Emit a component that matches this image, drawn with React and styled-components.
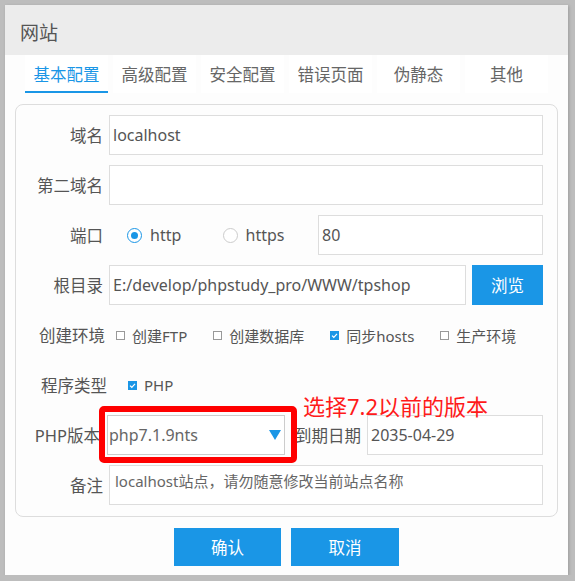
import React from "react";
import styled, { createGlobalStyle } from "styled-components";

const GlobalStyle = createGlobalStyle`
  html, body {
    margin: 0;
    padding: 0;
    background: #bdbdbd;
  }
  body {
    font-family: "Noto Sans", "Noto Sans CJK SC", sans-serif;
  }
`;

const BLUE = "#1a96e6";

const StyledDialog = styled.div`
  margin: 5px 0 0 5px;
  width: 563px;
  height: 570px;
  background: #fdfdfd;
  box-shadow: 1px 1px 3px rgba(0, 0, 0, 0.18);
  display: flex;
  flex-direction: column;
`;

const StyledHeader = styled.div`
  height: 50px;
  box-sizing: border-box;
  padding: 3px 0 0 15px;
  background: #ececec;
  display: flex;
  align-items: center;
  font-size: 19px;
  color: #555;
`;

const StyledTabBar = styled.div`
  display: flex;
  gap: 5px;
  padding-left: 20px;
  height: 38px;
  margin-bottom: 11px;
`;

const StyledTab = styled.div`
  width: 83px;
  box-sizing: border-box;
  display: flex;
  align-items: center;
  justify-content: center;
  padding-top: 2px;
  font-size: 16.5px;
  background: #fff;
  color: ${(p) => (p.$active ? BLUE : "#666")};
  border-bottom: 2px solid ${(p) => (p.$active ? BLUE : "transparent")};
`;

const StyledPanel = styled.div`
  margin: 0 10px;
  border: 1px solid #ddd;
  border-radius: 8px;
  padding: 10px 14px 11px 0;
  display: flex;
  flex-direction: column;
  gap: 10px;
`;

const StyledRow = styled.div`
  position: relative;
  display: flex;
  align-items: center;
  height: 40px;
`;

const StyledLabel = styled.div`
  flex: none;
  width: ${(p) => p.$width || 87}px;
  margin-right: ${(p) => (p.$gap === undefined ? 6 : p.$gap)}px;
  text-align: right;
  font-size: 16.5px;
  color: #555;
  white-space: nowrap;
`;

const StyledInput = styled.input`
  flex: 1;
  min-width: 0;
  height: 40px;
  box-sizing: border-box;
  margin: 0;
  border: 1px solid #ddd;
  border-radius: 0;
  padding: 0 3px;
  background: #fff;
  font-family: inherit;
  font-size: 16px;
  color: #555;
  outline: none;
`;

const StyledNote = styled.textarea`
  flex: 1;
  height: 40px;
  box-sizing: border-box;
  margin: 0;
  border: 1px solid #ddd;
  padding: 5px 5px;
  background: #fff;
  resize: none;
  overflow: hidden;
  font-family: inherit;
  font-size: 15px;
  line-height: 20px;
  color: #555;
  outline: none;

  &::placeholder {
    color: #666;
    opacity: 1;
  }
`;

const StyledButton = styled.div`
  flex: none;
  width: ${(p) => p.$width}px;
  height: ${(p) => p.$height || 40}px;
  margin-left: ${(p) => p.$left || 0}px;
  display: flex;
  align-items: center;
  justify-content: center;
  background: ${BLUE};
  color: #fff;
  font-size: 16.5px;
`;

const StyledRadioGroup = styled.div`
  display: flex;
  margin-left: 18px;
`;

const StyledRadio = styled.div`
  width: 95.5px;
  display: flex;
  align-items: center;
  gap: 8px;
  font-size: 16px;
  color: #555;
`;

const StyledDot = styled.span`
  width: 15px;
  height: 15px;
  box-sizing: border-box;
  border-radius: 50%;
  border: 1px solid ${(p) => (p.$on ? BLUE : "#ccc")};
  background: #fff;
  display: flex;
  align-items: center;
  justify-content: center;

  &::after {
    content: "";
    width: 7px;
    height: 7px;
    border-radius: 50%;
    background: ${(p) => (p.$on ? BLUE : "transparent")};
  }
`;

const StyledChecks = styled.div`
  display: flex;
  gap: 26px;
  margin-left: ${(p) => p.$left}px;
`;

const StyledCheck = styled.div`
  display: flex;
  align-items: center;
  gap: 7px;
  font-size: 15px;
  color: #555;
  white-space: nowrap;
`;

const StyledSelectWrap = styled.div`
  position: relative;
  width: 178px;
  height: 40px;
  flex: none;
`;

const StyledSelect = styled.div`
  height: 100%;
  box-sizing: border-box;
  border: 1px solid #ccc;
  background: #fff;
  display: flex;
  align-items: center;
  justify-content: space-between;
  padding: 0 3px 0 1px;
  font-size: 16px;
  color: #666;
`;

const StyledArrow = styled.span`
  width: 0;
  height: 0;
  border-left: 6px solid transparent;
  border-right: 6px solid transparent;
  border-top: 10px solid ${BLUE};
`;

const StyledHighlight = styled.div`
  position: absolute;
  left: -8px;
  top: -9px;
  right: -12px;
  bottom: -8px;
  border: 6px solid #ff0000;
  border-radius: 5px;
  pointer-events: none;
`;

const StyledHint = styled.div`
  position: absolute;
  left: 287px;
  top: -22px;
  font-size: 22px;
  line-height: 26px;
  color: #ff1a1a;
  white-space: nowrap;
`;

const StyledFooter = styled.div`
  display: flex;
  justify-content: center;
  gap: 10px;
  margin-top: 11px;
`;

const CheckBox = ({ on }) => (
  <svg width="9" height="9" viewBox="0 0 9 9">
    {on ? (
      <>
        <rect width="9" height="9" fill={BLUE} />
        <polyline
          points="2,4.6 3.8,6.3 7,2.8"
          fill="none"
          stroke="#fff"
          strokeWidth="1.2"
        />
      </>
    ) : (
      <rect x="0.5" y="0.5" width="8" height="8" fill="#fff" stroke="#999" />
    )}
  </svg>
);

const Check = ({ on, children }) => (
  <StyledCheck>
    <CheckBox on={on} />
    {children}
  </StyledCheck>
);

const Radio = ({ on, children }) => (
  <StyledRadio>
    <StyledDot $on={on} />
    {children}
  </StyledRadio>
);

const tabs = ["基本配置", "高级配置", "安全配置", "错误页面", "伪静态", "其他"];

const App = () => {
  return (
    <>
      <GlobalStyle />
      <StyledDialog>
        <StyledHeader>网站</StyledHeader>
        <StyledTabBar>
          {tabs.map((t, i) => (
            <StyledTab key={t} $active={i === 0}>
              {t}
            </StyledTab>
          ))}
        </StyledTabBar>

        <StyledPanel>
          <StyledRow>
            <StyledLabel>域名</StyledLabel>
            <StyledInput defaultValue="localhost" readOnly />
          </StyledRow>

          <StyledRow>
            <StyledLabel>第二域名</StyledLabel>
            <StyledInput defaultValue="" readOnly />
          </StyledRow>

          <StyledRow>
            <StyledLabel>端口</StyledLabel>
            <StyledRadioGroup>
              <Radio on>http</Radio>
              <Radio>https</Radio>
            </StyledRadioGroup>
            <StyledInput defaultValue="80" readOnly />
          </StyledRow>

          <StyledRow>
            <StyledLabel>根目录</StyledLabel>
            <StyledInput defaultValue="E:/develop/phpstudy_pro/WWW/tpshop" readOnly />
            <StyledButton $width={71} $left={6}>
              浏览
            </StyledButton>
          </StyledRow>

          <StyledRow>
            <StyledLabel $width={89} $gap={0}>
              创建环境
            </StyledLabel>
            <StyledChecks $left={11}>
              <Check>创建FTP</Check>
              <Check>创建数据库</Check>
              <Check on>同步hosts</Check>
              <Check>生产环境</Check>
            </StyledChecks>
          </StyledRow>

          <StyledRow>
            <StyledLabel $width={91} $gap={0}>
              程序类型
            </StyledLabel>
            <StyledChecks $left={21}>
              <Check on>PHP</Check>
            </StyledChecks>
          </StyledRow>

          <StyledRow>
            <StyledLabel $width={84} $gap={7}>
              PHP版本
            </StyledLabel>
            <StyledSelectWrap>
              <StyledSelect>
                php7.1.9nts
                <StyledArrow />
              </StyledSelect>
              <StyledHighlight />
            </StyledSelectWrap>
            <StyledLabel $width={76}>到期日期</StyledLabel>
            <StyledInput defaultValue="2035-04-29" readOnly />
            <StyledHint>选择7.2以前的版本</StyledHint>
          </StyledRow>

          <StyledRow>
            <StyledLabel>备注</StyledLabel>
            <StyledNote placeholder="localhost站点，请勿随意修改当前站点名称" readOnly />
          </StyledRow>
        </StyledPanel>

        <StyledFooter>
          <StyledButton $width={107} $height={38}>
            确认
          </StyledButton>
          <StyledButton $width={108} $height={38}>
            取消
          </StyledButton>
        </StyledFooter>
      </StyledDialog>
    </>
  );
};

export default App;
